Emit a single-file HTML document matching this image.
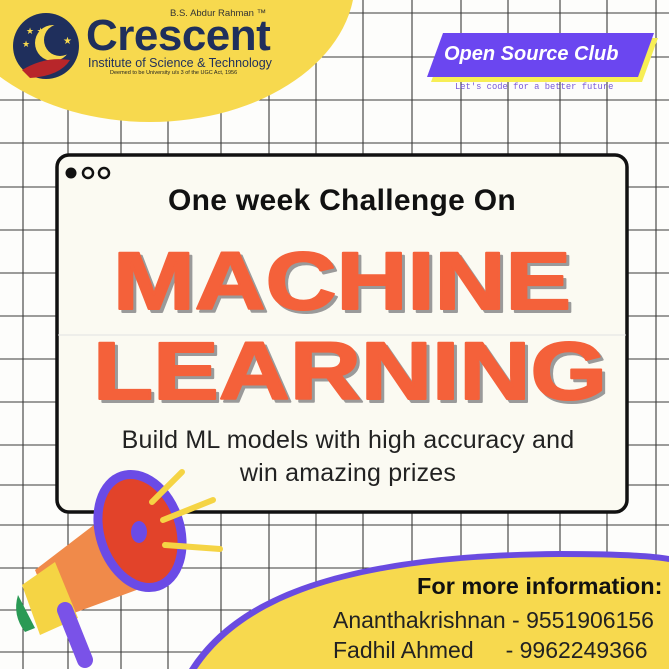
<!DOCTYPE html>
<html><head><meta charset="utf-8"><style>
html,body{margin:0;padding:0}
body{width:669px;height:669px;position:relative;overflow:hidden;background:#fdfdfb;font-family:"Liberation Sans",sans-serif}
.abs{position:absolute}
</style></head><body>
<svg class="abs" style="left:0;top:0" width="669" height="669" viewBox="0 0 669 669">
  <g stroke="#3a3a3a" stroke-width="1.1" fill="none">
    <path d="M23 0V669M68 0V669M121 0V669M168 0V669M221 0V669M269 0V669M316 0V669M363 0V669M412 0V669M461 0V669M508 0V669M560 0V669M607 0V669M656 0V669"/>
    <path d="M0 13H669M0 57H669M0 100H669M0 143H669M0 187H669M0 230H669M0 273H669M0 316H669M0 359H669M0 402H669M0 445H669M0 485H669M0 525H669M0 568H669M0 610H669M0 652H669"/>
  </g>
  <ellipse cx="150" cy="-20" rx="205" ry="142" fill="#f7d94e"/>
  <path d="M189 669 C234 598 336 553 560 551 Q640 551 669 556 V669 Z" fill="#6a4be0"/>
  <path d="M197 669 C242 602 342 558 560 557 Q640 557 669 562 V669 Z" fill="#f7d94e"/>
  <rect x="57" y="155" width="570" height="357" rx="12" fill="#fbfaf2" stroke="#111" stroke-width="3.5"/>
  <line x1="58" y1="335" x2="626" y2="335" stroke="#e2e2e2" stroke-width="1"/>
  <circle cx="71" cy="173" r="5.5" fill="#111"/>
  <circle cx="88" cy="173" r="5" fill="none" stroke="#111" stroke-width="2.5"/>
  <circle cx="104" cy="173" r="5" fill="none" stroke="#111" stroke-width="2.5"/>
  <g font-family="Liberation Sans, sans-serif" font-weight="900" font-size="82" stroke-linejoin="round">
    <text x="116" y="312" textLength="458" lengthAdjust="spacingAndGlyphs" fill="#9a9a9a" stroke="#9a9a9a" stroke-width="2">MACHINE</text>
    <text x="113" y="309" textLength="458" lengthAdjust="spacingAndGlyphs" fill="#f4613a" stroke="#f4613a" stroke-width="2">MACHINE</text>
    <text x="96" y="402" textLength="514" lengthAdjust="spacingAndGlyphs" fill="#9a9a9a" stroke="#9a9a9a" stroke-width="2">LEARNING</text>
    <text x="93" y="399" textLength="514" lengthAdjust="spacingAndGlyphs" fill="#f4613a" stroke="#f4613a" stroke-width="2">LEARNING</text>
  </g>
  <circle cx="46" cy="46" r="33" fill="#1f2f5c"/>
  <circle cx="53" cy="43" r="18" fill="#f7d94e"/>
  <circle cx="60" cy="40" r="16" fill="#1f2f5c"/>
  <path d="M22 70 Q45 56 70 60 Q60 76 30 78 Z" fill="#b8262a"/>
  <text x="26" y="34" fill="#f7d94e" font-size="9">★ ★</text><text x="22" y="47" fill="#f7d94e" font-size="9">★</text><text x="63" y="44" fill="#f7d94e" font-size="10">★</text>
  <polygon points="447,38 658,38 642,82 431,82" fill="#f7ee55"/>
  <polygon points="443,33 654,33 638,77 427,77" fill="#6b46f0"/>
  <g>
    <path d="M35 570 L120 505 L150 585 L55 620 Z" fill="#f08a4a"/>
    <path d="M22 585 L55 562 L78 618 L40 635 Z" fill="#f5d444"/>
    <path d="M18 595 Q12 615 25 632 L35 628 Z" fill="#2a9a55"/>
    <path d="M65 610 L85 660" stroke="#7a52e8" stroke-width="16" stroke-linecap="round"/>
    <ellipse cx="140" cy="531" rx="40" ry="58" transform="rotate(-18 140 531)" fill="#e2432a" stroke="#6b4be6" stroke-width="9"/>
    <ellipse cx="139" cy="532" rx="8" ry="11" fill="#6b4be6"/>
    <g stroke="#f5d444" stroke-width="6" stroke-linecap="round">
      <path d="M152 502 L182 472"/><path d="M163 520 L213 500"/><path d="M165 545 L220 549"/>
    </g>
  </g>
</svg>
<div class="abs" style="left:86px;top:14px;color:#1f2f5c;font-size:44px;font-weight:bold;letter-spacing:-0.5px;line-height:44px">Crescent</div>
<div class="abs" style="left:170px;top:8px;color:#333;font-size:9.5px">B.S. Abdur Rahman ™</div>
<div class="abs" style="left:88px;top:56px;color:#1f2f5c;font-size:12.5px">Institute of Science &amp; Technology</div>
<div class="abs" style="left:110px;top:70px;color:#222;font-size:5.5px">Deemed to be University u/s 3 of the UGC Act, 1956</div>
<div class="abs" style="left:444px;top:43px;width:210px;color:#fff;font-size:20px;font-weight:bold;font-style:italic">Open Source Club</div>
<div class="abs" style="left:455px;top:82px;color:#7a5ad8;font-size:8.8px;font-family:'Liberation Mono',monospace">Let's code for a better future</div>
<div class="abs" style="left:57px;top:184px;width:570px;text-align:center;color:#111;font-size:30px;font-weight:bold;letter-spacing:0.3px">One week Challenge On</div>
<div class="abs" style="left:50px;top:424px;width:596px;text-align:center;color:#222;font-size:25px;line-height:33px;letter-spacing:0.2px">Build ML models with high accuracy and<br>win amazing prizes</div>
<div class="abs" style="left:417px;top:573px;color:#111;font-size:23.5px;font-weight:bold;white-space:nowrap">For more information:</div>
<div class="abs" style="left:333px;top:605px;color:#222;font-size:23px;line-height:30px;white-space:pre">Ananthakrishnan - 9551906156
Fadhil Ahmed     - 9962249366</div>
</body></html>
